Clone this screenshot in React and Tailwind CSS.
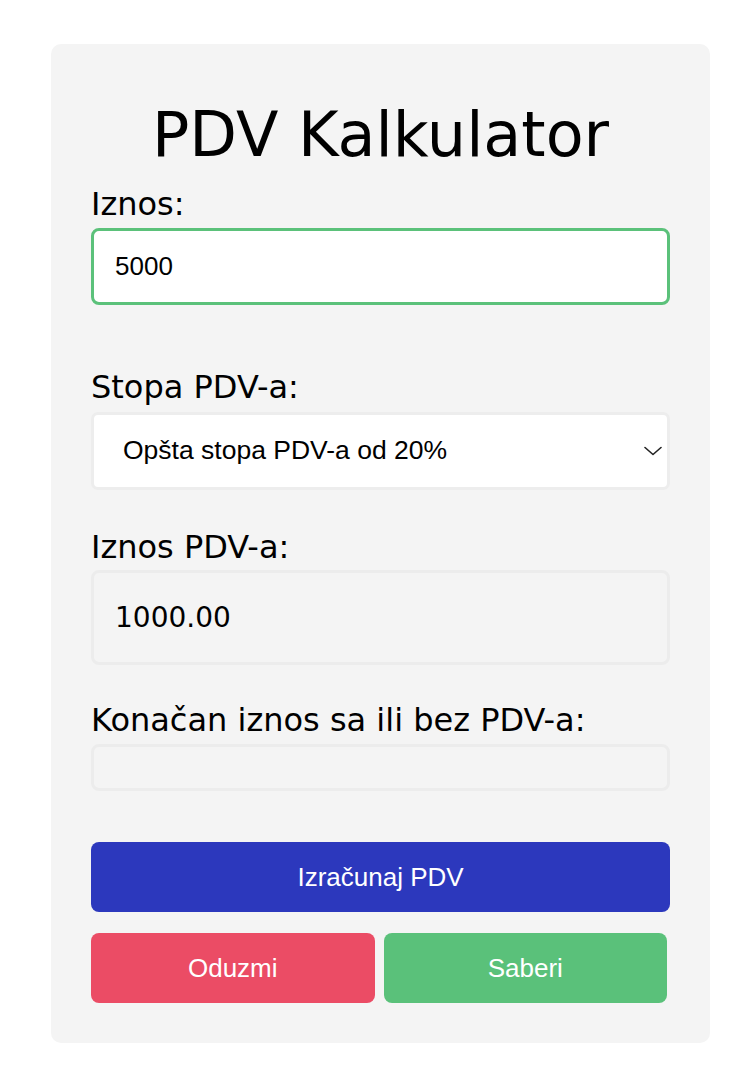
import { useState } from 'react';

const poppinsLike = "font-['DejaVu_Sans',sans-serif]";
const arial = "font-['Liberation_Sans',Arial,sans-serif]";

function Label({ children, className = '' }) {
    return (
        <label className={`block text-[32px] leading-[36px] text-black ${poppinsLike} ${className}`}>
            {children}
        </label>
    );
}

export default function App() {
    const [amount, setAmount] = useState('5000');
    const [rate, setRate] = useState('20');

    return (
        <div className="min-h-[1090px] bg-white pt-[44px]">
            <div className="ml-[51px] w-[659px] rounded-[10px] bg-[#f4f4f4] px-[40px] pt-[60px] pb-[40px]">
                <h1 className={`text-center text-[62px] leading-[62px] font-normal text-black ${poppinsLike}`}>
                    PDV Kalkulator
                </h1>

                {/* Iznos */}
                <Label className="mt-[20px] mb-[6px]">Iznos:</Label>
                <input
                    type="text"
                    value={amount}
                    onChange={e => setAmount(e.target.value)}
                    className={`block h-[77px] w-full rounded-[8px] border-[3px] border-[#5bc17a] bg-white pl-[21px] text-[26px] text-black outline-none ${arial}`}
                />

                {/* Stopa */}
                <Label className="mt-[64px] mb-[7px]">Stopa PDV-a:</Label>
                <div className="relative">
                    <select
                        value={rate}
                        onChange={e => setRate(e.target.value)}
                        className={`block h-[78px] w-full appearance-none rounded-[7px] border-[3px] border-[#ededed] bg-white pl-[29px] text-[26.5px] text-black outline-none ${arial}`}
                    >
                        <option value="20">Opšta stopa PDV-a od 20%</option>
                        <option value="10">Posebna stopa PDV-a od 10%</option>
                    </select>
                    <svg
                        className="pointer-events-none absolute right-[8px] top-[34px] h-[10px] w-[18px]"
                        viewBox="0 0 18 10"
                        fill="none"
                        stroke="#222"
                        strokeWidth="1.6"
                        strokeLinecap="round"
                        strokeLinejoin="round"
                    >
                        <path d="M1 1.5 L9 8.5 L17 1.5" />
                    </svg>
                </div>

                {/* Iznos PDV-a */}
                <Label className="mt-[39px] mb-[5px]">Iznos PDV-a:</Label>
                <div className={`flex h-[95px] items-center rounded-[8px] border-[3px] border-[#ececec] pl-[21px] text-[28px] text-black ${poppinsLike}`}>
                    1000.00
                </div>

                {/* Konacan iznos */}
                <Label className="mt-[37px] mb-[6px]">Konačan iznos sa ili bez PDV-a:</Label>
                <div className="h-[47px] rounded-[8px] border-[3px] border-[#ececec]"></div>

                <button className={`mt-[51px] block h-[70px] w-full rounded-[8px] bg-[#2c38bd] text-[26px] text-white ${arial}`}>
                    Izračunaj PDV
                </button>

                <div className="mt-[21px] grid w-[576px] grid-cols-2 gap-[9px]">
                    <button className={`h-[70px] rounded-[8px] bg-[#eb4c65] text-[26px] text-white ${arial}`}>
                        Oduzmi
                    </button>
                    <button className={`h-[70px] rounded-[8px] bg-[#5ac17a] text-[26px] text-white ${arial}`}>
                        Saberi
                    </button>
                </div>
            </div>
        </div>
    );
}
